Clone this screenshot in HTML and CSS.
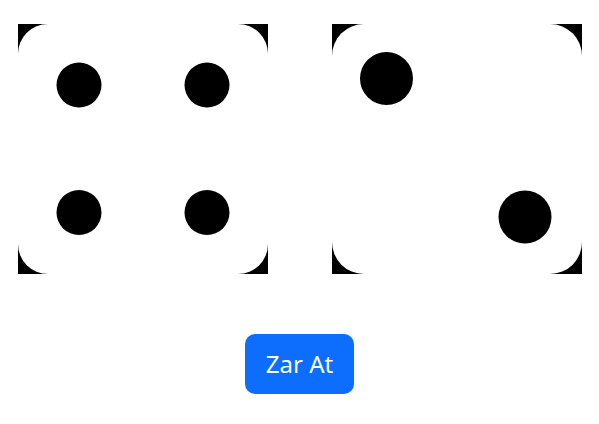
FILE: index.html
```html
<!DOCTYPE html>
<html lang="tr">
<head>
<meta charset="utf-8">
<title>Zar</title>
<link rel="stylesheet" href="styles.css">
</head>
<body>
<main class="app">
  <div class="dice-row">
    <svg class="die" width="250" height="250" viewBox="0 0 250 250" aria-label="Zar 4">
      <rect width="250" height="250" fill="#000"/>
      <rect width="250" height="250" rx="30" ry="30" fill="#fff"/>
      <circle cx="61" cy="61" r="22.5" fill="#000"/>
      <circle cx="189" cy="61" r="22.5" fill="#000"/>
      <circle cx="61" cy="188.5" r="22.5" fill="#000"/>
      <circle cx="189" cy="188.5" r="22.5" fill="#000"/>
    </svg>
    <svg class="die" width="250" height="250" viewBox="0 0 250 250" aria-label="Zar 2">
      <rect width="250" height="250" fill="#000"/>
      <rect width="250" height="250" rx="32" ry="32" fill="#fff"/>
      <circle cx="54.5" cy="54.5" r="26.5" fill="#000"/>
      <circle cx="193" cy="193" r="26.5" fill="#000"/>
    </svg>
  </div>
  <button class="roll-btn" type="button">Zar At</button>
</main>
</body>
</html>
```

FILE: styles.css
```css
html, body {
  margin: 0;
  padding: 0;
  background: #fff;
}
body {
  font-family: "Noto Sans", "Open Sans", sans-serif;
}
.app {
  display: flex;
  flex-direction: column;
  align-items: center;
  padding-top: 24px;
}
.dice-row {
  display: flex;
  gap: 64px;
}
.die {
  display: block;
}
.roll-btn {
  margin-top: 60px;
  width: 109px;
  height: 60px;
  padding: 0;
  border: 0;
  border-radius: 10px;
  background: #0d6efd;
  color: #fff;
  font-family: "Noto Sans", "Open Sans", sans-serif;
  font-size: 24px;
  line-height: 1;
  cursor: pointer;
}
```
